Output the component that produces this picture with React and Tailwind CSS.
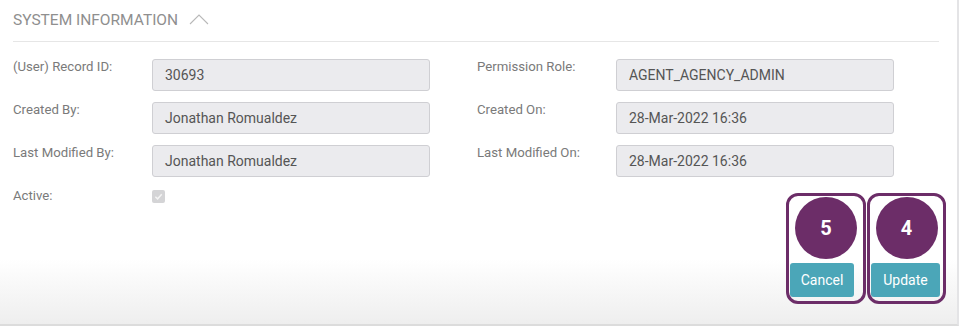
import React from "react";

function Field({ label, value, labelW }) {
  return (
    <div className="flex items-start">
      <div className={`${labelW} text-[13.2px] leading-[16px] text-[#7a7a7a]`}>{label}</div>
      <div className="w-[278px] h-[32px] rounded-[3px] border border-[#cfcfd3] bg-[#ebebee] flex items-center pl-[12px] text-[14px] text-[#555]">
        {value}
      </div>
    </div>
  );
}

function Annotated({ n, children, boxW }) {
  return (
    <div className="relative">
      <div
        className={`absolute left-[-4px] top-[-70px] ${boxW} h-[111px] rounded-[12px] border-[3px] border-[#6c2d68] flex justify-center pt-[1px]`}
      >
        <div className="w-[62px] h-[62px] rounded-full bg-[#6c2d68] flex items-center justify-center text-white font-bold text-[20px]">
          {n}
        </div>
      </div>
      {children}
    </div>
  );
}

export default function App() {
  return (
    <div className="w-[960px] h-[326px] bg-white" style={{ fontFamily: "Roboto, 'Liberation Sans', sans-serif" }}>
      <div className="w-[959px] h-[326px] border-r-2 border-r-[#e4e4e6] border-b-2 border-b-[#dcdcdc] bg-gradient-to-b from-white from-[80%] to-[#eeeeee] flex flex-col">
        <div className="h-[42px] mx-[13px] mr-[18px] border-b border-[#e6e6e6] flex items-center">
          <span className="text-[15.5px] text-[#8f8f8f] tracking-[0px]">SYSTEM INFORMATION</span>
          <svg width="20" height="12" viewBox="0 0 20 12" className="ml-[11px] mb-[4px]">
            <path d="M1 11 L10 2 L19 11" fill="none" stroke="#b8b8b8" strokeWidth="1.1" />
          </svg>
        </div>
        <div className="pl-[13px] pt-[17px] flex flex-col gap-[11px]">
          <div className="flex">
            <div className="w-[464px]"><Field label="(User) Record ID:" value="30693" labelW="w-[139px]" /></div>
            <Field label="Permission Role:" value="AGENT_AGENCY_ADMIN" labelW="w-[139px]" />
          </div>
          <div className="flex">
            <div className="w-[464px]"><Field label="Created By:" value="Jonathan Romualdez" labelW="w-[139px]" /></div>
            <Field label="Created On:" value="28-Mar-2022 16:36" labelW="w-[139px]" />
          </div>
          <div className="flex">
            <div className="w-[464px]"><Field label="Last Modified By:" value="Jonathan Romualdez" labelW="w-[139px]" /></div>
            <Field label="Last Modified On:" value="28-Mar-2022 16:36" labelW="w-[139px]" />
          </div>
          <div className="flex items-start mt-[0px]">
            <div className="w-[139px] text-[13.2px] leading-[16px] text-[#7a7a7a]">Active:</div>
            <div className="w-[13px] h-[13px] mt-[2px] rounded-[2px] bg-[#d4d4d6] flex items-center justify-center">
              <svg width="9" height="9" viewBox="0 0 10 10">
                <path d="M1.5 5.2 L4 7.6 L8.6 2.4" fill="none" stroke="#f4f4f4" strokeWidth="1.6" />
              </svg>
            </div>
          </div>
        </div>
        <div className="flex justify-end gap-[17px] pr-[17px] mt-[59px]">
          <Annotated n="5" boxW="w-[80px]">
            <button className="w-[64px] h-[34px] rounded-[3px] bg-[#4ba6b8] text-white text-[14px]">Cancel</button>
          </Annotated>
          <Annotated n="4" boxW="w-[79px]">
            <button className="w-[69px] h-[34px] rounded-[3px] bg-[#4ba6b8] text-white text-[14px]">Update</button>
          </Annotated>
        </div>
      </div>
    </div>
  );
}
